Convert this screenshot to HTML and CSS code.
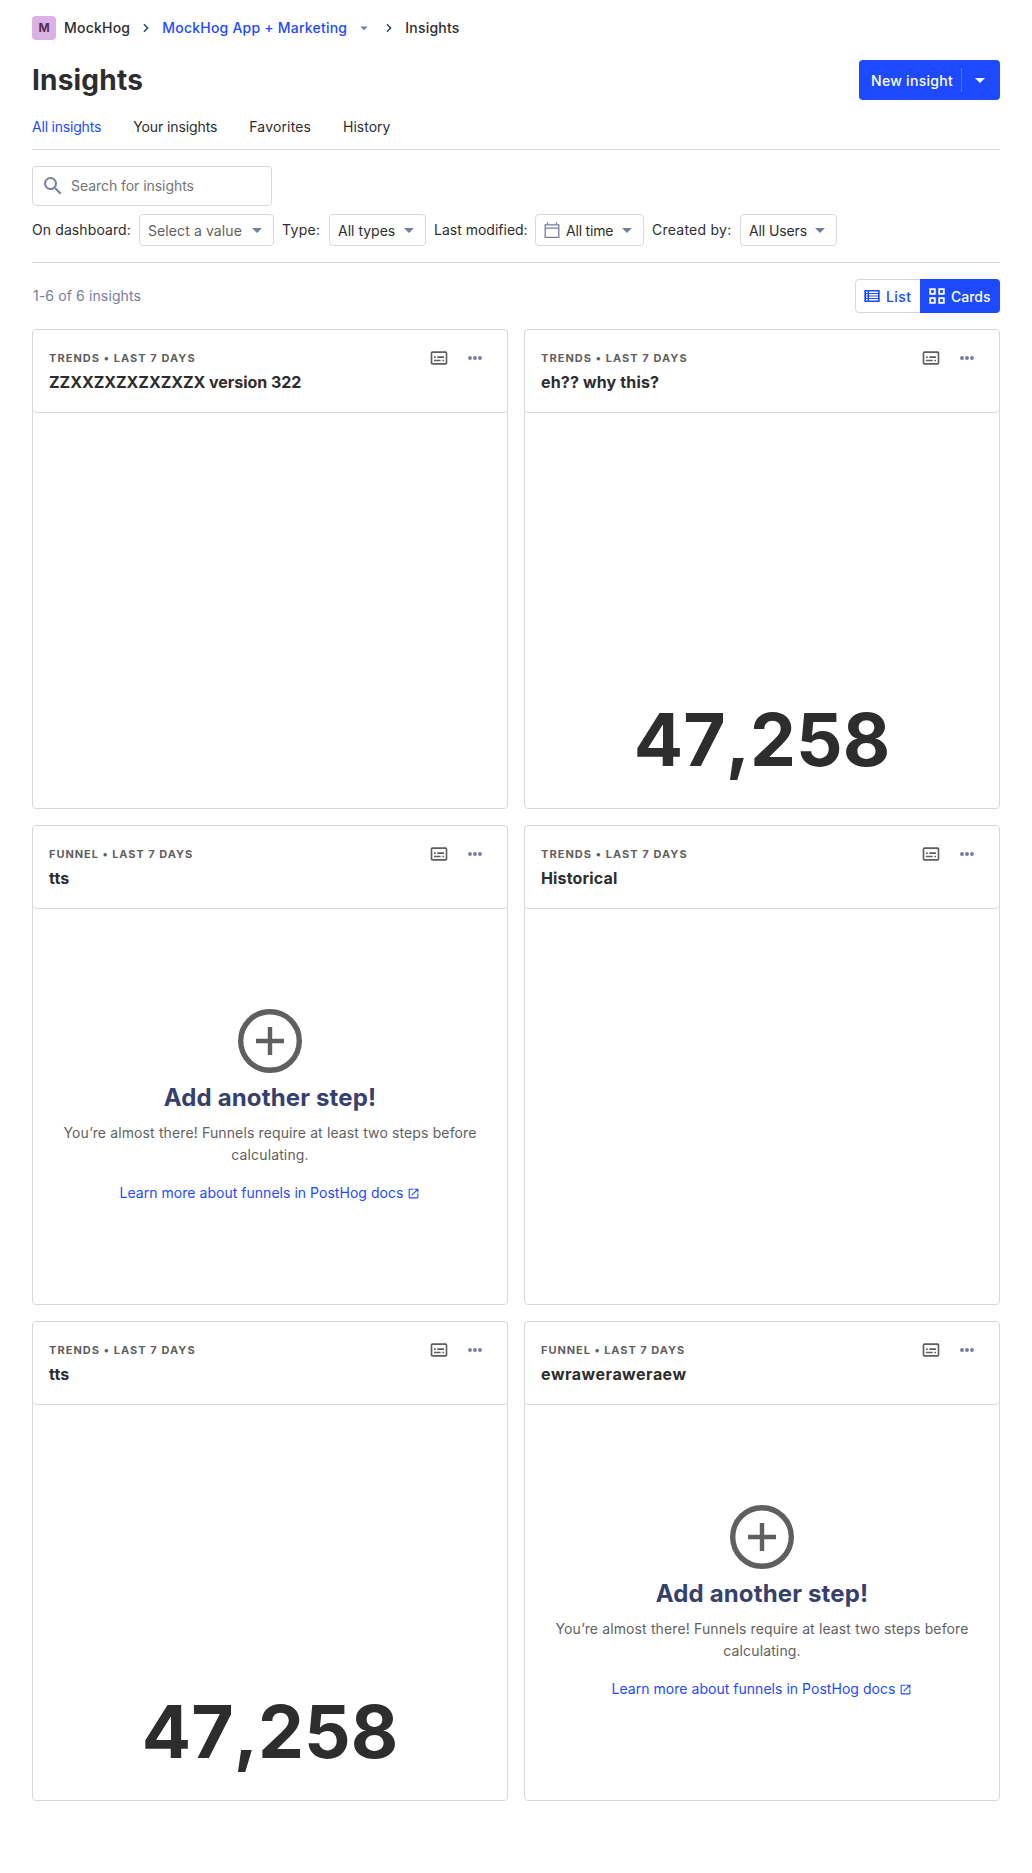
FILE: index.html
```html
<!DOCTYPE html>
<html lang="en">
<head>
<meta charset="utf-8">
<title>Insights</title>
<link rel="stylesheet" href="styles.css">
</head>
<body>
<svg class="sprite" aria-hidden="true">
  <symbol id="caret" viewBox="0 0 24 24"><path d="M7 10l5 5 5-5z" fill="currentColor"/></symbol>
  <symbol id="chevron" viewBox="0 0 24 24"><path d="M7.6 17.4L13 12 7.6 6.6 9.4 4.8l7.2 7.2-7.2 7.2z" fill="currentColor"/></symbol>
  <symbol id="details" viewBox="0 0 24 24"><path fill="currentColor" fill-rule="evenodd" d="M20 4H4a2 2 0 0 0-2 2v12a2 2 0 0 0 2 2h16a2 2 0 0 0 2-2V6a2 2 0 0 0-2-2zm0 14H4V6h16v12zM6 10h2v2H6zm0 4h8v2H6zm10 0h2v2h-2zm-6-4h8v2h-8z"/></symbol>
  <symbol id="dots" viewBox="0 0 24 24"><g fill="currentColor"><circle cx="6" cy="12" r="2.3"/><circle cx="12" cy="12" r="2.3"/><circle cx="18" cy="12" r="2.3"/></g></symbol>
  <symbol id="plus" viewBox="0 0 64 64"><circle cx="32" cy="32" r="29.3" fill="none" stroke="currentColor" stroke-width="5.4"/><path d="M18 32h28M32 18v28" stroke="currentColor" stroke-width="4.4" fill="none"/></symbol>
  <symbol id="external" viewBox="0 0 24 24"><path fill="currentColor" d="M19 19H5V5h7V3H5a2 2 0 0 0-2 2v14a2 2 0 0 0 2 2h14a2 2 0 0 0 2-2v-7h-2v7zM14 3v2h3.6l-9.8 9.8 1.4 1.4L19 6.4V10h2V3h-7z"/></symbol>
</svg>
<main class="page">
  <nav class="breadcrumbs">
    <span class="avatar">M</span>
    <span class="crumb">MockHog</span>
    <svg class="crumb-sep"><use href="#chevron"/></svg>
    <a class="crumb crumb-link">MockHog App + Marketing</a>
    <svg class="crumb-caret"><use href="#caret"/></svg>
    <svg class="crumb-sep crumb-sep-last"><use href="#chevron"/></svg>
    <span class="crumb">Insights</span>
  </nav>
  <header class="title-bar">
    <h1>Insights</h1>
    <button class="new-insight"><span class="new-label">New insight</span><span class="new-more"><svg><use href="#caret"/></svg></span></button>
  </header>
  <div class="tabs"><a class="tab active">All insights</a><a class="tab tab-yours">Your insights</a><a class="tab tab-favorites">Favorites</a><a class="tab">History</a></div>
  <div class="search">
    <svg class="search-icon" viewBox="0 0 24 24"><path fill="currentColor" d="M15.5 14h-.79l-.28-.27A6.47 6.47 0 0 0 16 9.5 6.5 6.5 0 1 0 9.5 16c1.61 0 3.09-.59 4.23-1.57l.27.28v.79l5 4.99L20.49 19l-4.99-5zm-6 0a4.5 4.5 0 1 1 0-9 4.5 4.5 0 0 1 0 9z"/></svg>
    <span>Search for insights</span>
  </div>
  <div class="filters">
    <span class="f-label l-dashboard">On dashboard:</span><span class="select s-dashboard muted"><span>Select a value</span><svg><use href="#caret"/></svg></span>
    <span class="f-label l-type">Type:</span><span class="select s-type"><span>All types</span><svg><use href="#caret"/></svg></span>
    <span class="f-label l-date">Last modified:</span><span class="select s-date"><svg class="calendar" viewBox="0 0 16 17"><path fill="none" stroke="currentColor" stroke-width="1.3" d="M1.2 2.8h13.6v12.6H1.2zM1.2 6.2h13.6M3.5 .5v2.3M12.5 .5v2.3"/></svg><span>All time</span><svg><use href="#caret"/></svg></span>
    <span class="f-label l-user">Created by:</span><span class="select s-user"><span>All Users</span><svg><use href="#caret"/></svg></span>
  </div>
  <div class="results">
    <span class="count">1-6 of 6 insights</span>
    <div class="view-toggle">
      <span class="view"><svg viewBox="0 0 16 16"><path fill="currentColor" fill-rule="evenodd" d="M.3 2h15.4v12H.3zM2 3.5v1.4h1.6V3.5zM2 6.1v1.3h1.6V6.1zM2 8.6v1.3h1.6V8.6zM2 11.1v1.4h1.6v-1.4zM5 3.5v1.4h9V3.5zM5 6.1v1.3h9V6.1zM5 8.6v1.3h9V8.6zM5 11.1v1.4h9v-1.4z"/></svg>List</span>
      <span class="view selected"><svg viewBox="0 0 16 16"><path fill="none" stroke="currentColor" stroke-width="1.8" d="M1.2 1.2h4.6v4.6H1.2zM10.2 1.2h4.6v4.6h-4.6zM1.2 10.2h4.6v4.6H1.2zM10.2 10.2h4.6v4.6h-4.6z"/></svg>Cards</span>
    </div>
  </div>
  <section class="cards">
    <article class="card">
      <div class="card-head"><div class="card-text"><h5>Trends • Last 7 days</h5><h4 class="tight">ZZXXZXZXZXZXZX version 322</h4></div><div class="card-actions"><svg class="details"><use href="#details"/></svg><svg class="dots"><use href="#dots"/></svg></div></div>
      <div class="card-body"></div>
    </article>
    <article class="card">
      <div class="card-head"><div class="card-text"><h5>Trends • Last 7 days</h5><h4>eh?? why this?</h4></div><div class="card-actions"><svg class="details"><use href="#details"/></svg><svg class="dots"><use href="#dots"/></svg></div></div>
      <div class="card-body number">47,258</div>
    </article>
    <article class="card">
      <div class="card-head"><div class="card-text"><h5 class="funnel">Funnel • Last 7 days</h5><h4>tts</h4></div><div class="card-actions"><svg class="details"><use href="#details"/></svg><svg class="dots"><use href="#dots"/></svg></div></div>
      <div class="card-body empty"><svg class="plus"><use href="#plus"/></svg><h2>Add another step!</h2><p>You’re almost there! Funnels require at least two steps before calculating.</p><a class="learn">Learn more about funnels in PostHog docs<svg><use href="#external"/></svg></a></div>
    </article>
    <article class="card">
      <div class="card-head"><div class="card-text"><h5>Trends • Last 7 days</h5><h4>Historical</h4></div><div class="card-actions"><svg class="details"><use href="#details"/></svg><svg class="dots"><use href="#dots"/></svg></div></div>
      <div class="card-body"></div>
    </article>
    <article class="card">
      <div class="card-head"><div class="card-text"><h5>Trends • Last 7 days</h5><h4>tts</h4></div><div class="card-actions"><svg class="details"><use href="#details"/></svg><svg class="dots"><use href="#dots"/></svg></div></div>
      <div class="card-body number">47,258</div>
    </article>
    <article class="card">
      <div class="card-head"><div class="card-text"><h5 class="funnel">Funnel • Last 7 days</h5><h4 class="loose">ewraweraweraew</h4></div><div class="card-actions"><svg class="details"><use href="#details"/></svg><svg class="dots"><use href="#dots"/></svg></div></div>
      <div class="card-body empty"><svg class="plus"><use href="#plus"/></svg><h2>Add another step!</h2><p>You’re almost there! Funnels require at least two steps before calculating.</p><a class="learn">Learn more about funnels in PostHog docs<svg><use href="#external"/></svg></a></div>
    </article>
  </section>
</main>
</body>
</html>
```
FILE: styles.css
```css
* { box-sizing: border-box; }
body { margin: 0; background: #fff; color: #2d2d2d; font: 14px/22px Inter, sans-serif; font-optical-sizing: none; }
h1, h2, h4, h5, p { margin: 0; }
svg { display: block; flex: none; }
.sprite { display: none; }
.page { width: 1032px; height: 1873px; padding: 16px 32px 0; }

.breadcrumbs { display: flex; align-items: center; height: 24px; font-weight: 500; }
.avatar { width: 24px; height: 24px; margin-right: 8px; border-radius: 4px; background: #dcb1e3; color: #572e5e; font-size: 12px; font-weight: 700; line-height: 24px; text-align: center; }
.crumb { white-space: nowrap; letter-spacing: .22px; }
.crumb-link { color: #1d4aff; }
.crumb-sep { width: 14px; height: 14px; margin: 0 9px 0 9px; color: #35416b; }
.crumb-caret { width: 18px; height: 18px; margin-left: 8px; color: #747ea2; }
.crumb-sep-last { margin-left: 9px; }

.title-bar { display: flex; justify-content: space-between; align-items: center; height: 40px; margin-top: 20px; }
h1 { font-size: 28px; font-weight: 700; line-height: 40px; letter-spacing: .2px; }
.new-insight { display: flex; align-items: center; width: 141px; height: 40px; padding: 0 0 0 12px; border: 0; border-radius: 4px; background: #1d4aff; color: #fff; font: 500 14px/22px Inter, sans-serif; letter-spacing: .3px; }
.new-label { width: 90px; padding-top: 2px; text-align: left; white-space: nowrap; }
.new-more { display: flex; align-items: center; height: 24px; padding-left: 6px; border-left: 1px solid #4a6eff; }
.new-more svg { width: 24px; height: 24px; }

.tabs { display: flex; gap: 32px; height: 50px; padding-top: 16px; border-bottom: 1px solid #d9d9d9; }
.active { color: #1d4aff; letter-spacing: -.2px; }
.tab-yours { letter-spacing: -.1px; }
.tab-favorites { letter-spacing: .15px; }

.search { display: flex; align-items: center; gap: 6px; width: 240px; height: 40px; margin-top: 16px; padding-left: 8px; border: 1px solid #d9d9d9; border-radius: 4px; color: #757575; letter-spacing: -.05px; }
.search-icon { width: 24px; height: 24px; color: #747ea2; }

.filters { display: flex; align-items: flex-start; gap: 8px; height: 49px; margin-top: 8px; border-bottom: 1px solid #d9d9d9; white-space: nowrap; }
.f-label { line-height: 32px; }
.l-dashboard { width: 99px; letter-spacing: .1px; }
.l-type { width: 39px; letter-spacing: .3px; }
.l-date { width: 93px; }
.l-user { width: 80px; letter-spacing: .25px; }
.select { display: flex; align-items: center; justify-content: space-between; height: 32px; padding: 2px 4px 0 8px; border: 1px solid #d9d9d9; border-radius: 4px; }
.select svg { width: 24px; height: 24px; margin-top: -2px; color: #747ea2; }
.select .calendar { width: 16px; height: 17px; }
.s-dashboard { width: 135px; letter-spacing: .1px; }
.s-type { width: 97px; }
.s-date { width: 109px; letter-spacing: -.2px; }
.s-date .calendar { margin-right: 6px; }
.s-date span { margin-right: auto; }
.s-user { width: 97px; letter-spacing: -.12px; }
.muted { color: #5f5f5f; }

.results { display: flex; justify-content: space-between; align-items: center; height: 34px; margin-top: 16px; }
.count { padding-left: 1px; color: #747ea2; letter-spacing: .12px; }
.view-toggle { display: flex; }
.view { display: flex; align-items: center; gap: 6px; width: 65px; height: 34px; padding: 2px 0 0 8px; border: 1px solid #d9d9d9; border-right: 0; border-radius: 4px 0 0 4px; color: #1d4aff; font-weight: 500; letter-spacing: .4px; }
.view svg { width: 16px; height: 16px; margin-top: -2px; }
.selected { width: 80px; border-color: #1d4aff; border-radius: 0 4px 4px 0; background: #1d4aff; color: #fff; letter-spacing: 0; }

.cards { display: grid; grid-template-columns: 1fr 1fr; grid-auto-rows: 480px; gap: 16px; margin-top: 16px; }
.card { display: flex; flex-direction: column; border: 1px solid #d9d9d9; border-radius: 4px; }
.card-head { display: flex; justify-content: space-between; height: 83px; padding: 16px; border-bottom: 1px solid #d9d9d9; border-radius: 4px; }
h5 { color: #5f5f5f; font-size: 11px; font-weight: 700; line-height: 16px; letter-spacing: 1.05px; text-transform: uppercase; padding-top: 4px; }
.funnel { letter-spacing: .95px; }
h4 { margin-top: 4px; font-size: 16px; font-weight: 700; line-height: 24px; letter-spacing: .15px; }
.tight { letter-spacing: -.05px; }
.loose { font-kerning: none; letter-spacing: .4px; }
.card-actions { display: flex; align-items: center; gap: 16px; height: 24px; }
.details { width: 20px; height: 20px; color: #5f5f5f; }
.dots { width: 20px; height: 20px; margin-right: 6px; color: #747ea2; }
.card-body { flex: 1; }
.number { display: flex; align-items: flex-end; justify-content: center; padding-bottom: 23px; font-size: 73px; font-weight: 700; line-height: 90px; font-kerning: none; }
.empty { display: flex; flex-direction: column; align-items: center; padding: 100px 16px 0; text-align: center; }
.plus { width: 64px; height: 64px; color: #5f5f5f; }
h2 { margin-top: 8px; color: #35416b; font-size: 24px; font-weight: 700; line-height: 34px; letter-spacing: .15px; }
.empty p { margin-top: 7px; color: #5f5f5f; letter-spacing: .13px; }
.learn { display: flex; align-items: center; gap: 4px; margin-top: 16px; color: #1d4aff; letter-spacing: .03px; }
.learn svg { width: 13px; height: 13px; }
```
